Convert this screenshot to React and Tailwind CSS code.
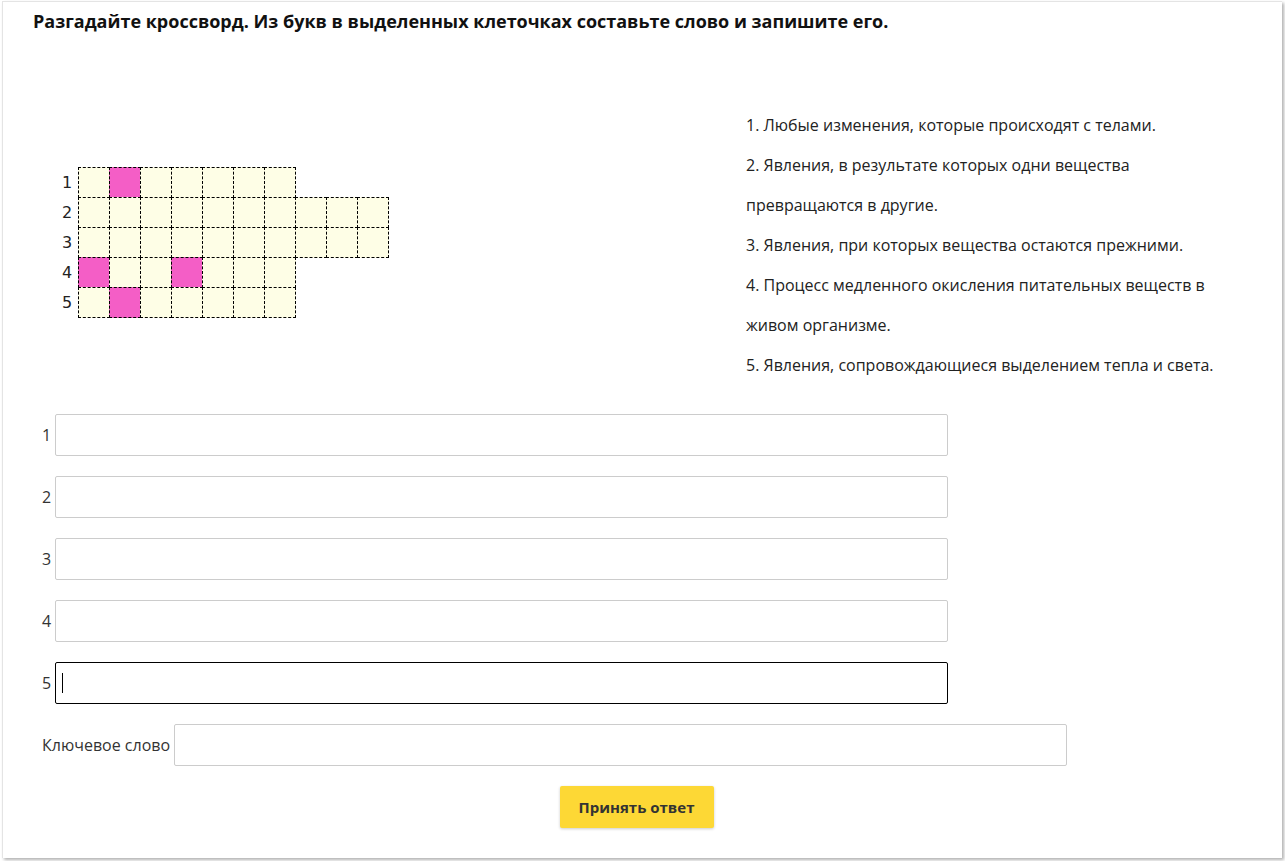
import React from "react";

const rows = [
  { n: 1, len: 7, pink: [1] },
  { n: 2, len: 10, pink: [] },
  { n: 3, len: 10, pink: [] },
  { n: 4, len: 7, pink: [0, 3] },
  { n: 5, len: 7, pink: [1] },
];

const clues = [
  "1. Любые изменения, которые происходят с телами.",
  "2. Явления, в результате которых одни вещества превращаются в другие.",
  "3. Явления, при которых вещества остаются прежними.",
  "4. Процесс медленного окисления питательных веществ в живом организме.",
  "5. Явления, сопровождающиеся выделением тепла и света.",
];

function Crossword() {
  return (
    <div className="flex flex-col pt-px pl-px">
      {rows.map((row) => (
        <div key={row.n} className="flex items-center">
          <div className="w-[20px] mr-[2px] text-center text-[16px] text-[#222] font-['DejaVu_Sans',sans-serif]">
            {row.n}
          </div>
          <div className="flex">
            {Array.from({ length: row.len }).map((_, i) => (
              <div
                key={i}
                className={
                  "w-[32px] h-[31px] -ml-px -mt-px border border-dashed border-black " +
                  (row.pink.includes(i) ? "bg-[#f45ec6]" : "bg-[#fefee6]")
                }
              />
            ))}
          </div>
        </div>
      ))}
    </div>
  );
}

function AnswerRow({ label, focused }) {
  return (
    <div className="flex items-center gap-[4px] mb-[20px]">
      <span className="text-[16px] text-[#333]">{label}</span>
      <div className="relative">
        <input
          type="text"
          className={
            "w-[893px] h-[42px] rounded-[2px] bg-white outline-none px-2 " +
            (focused ? "border border-black" : "border border-[#cccccc]")
          }
        />
        {focused && (
          <div className="absolute left-[7px] top-[11px] w-px h-[20px] bg-black" />
        )}
      </div>
    </div>
  );
}

export default function App() {
  return (
    <div className="bg-white min-h-[861px] pt-px pl-[2px] pr-[3px] pb-[3px] font-['Open_Sans',sans-serif]">
      <div className="h-[857px] bg-white border-l border-t border-[#e4e4e4] shadow-[2px_2px_3px_rgba(0,0,0,0.3)]">
        <h1 className="pl-[30px] pt-[7px] text-[18px] leading-[24px] font-bold text-[#111]">
          Разгадайте кроссворд. Из букв в выделенных клеточках составьте слово и запишите его.
        </h1>

        <div className="flex items-start mt-[72px]">
          <div className="w-[743px] pl-[53px] pt-[62px]">
            <Crossword />
          </div>
          <div className="w-[478px] text-[16px] leading-[40px] text-[#222]">
            {clues.map((c) => (
              <p key={c}>{c}</p>
            ))}
          </div>
        </div>

        <div className="pl-[39px] mt-[29px]">
          <AnswerRow label="1" />
          <AnswerRow label="2" />
          <AnswerRow label="3" />
          <AnswerRow label="4" />
          <AnswerRow label="5" focused />
          <AnswerRow label="Ключевое слово" />
        </div>

        <div className="flex justify-center pr-[12px]">
          <button className="w-[154px] h-[42px] rounded-[2px] bg-[#fdd835] text-[15px] font-bold text-[#333] shadow-[0_1px_3px_rgba(0,0,0,0.2)]">
            Принять ответ
          </button>
        </div>
      </div>
    </div>
  );
}
